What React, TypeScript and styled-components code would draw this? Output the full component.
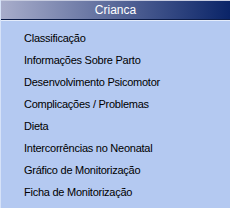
import styled, { createGlobalStyle } from "styled-components";

const GlobalStyle = createGlobalStyle`
    html, body {
        margin: 0;
        padding: 0;
        background: #b4c9f1;
    }
`;

const items = [
    "Classificação",
    "Informações Sobre Parto",
    "Desenvolvimento Psicomotor",
    "Complicações / Problemas",
    "Dieta",
    "Intercorrências no Neonatal",
    "Gráfico de Monitorização",
    "Ficha de Monitorização",
];

export default function App() {
    return (
        <>
            <GlobalStyle/>
            <Panel>
                <Header>Crianca</Header>
                <List>
                    {items.map((item, index) => (
                        <Item key={index}>{item}</Item>
                    ))}
                </List>
            </Panel>
        </>
    );
}

const Panel = styled.div`
    width: 230px;
    height: 208px;
    display: flex;
    flex-direction: column;
    background: #b4c9f1;
    border-left: 1px solid #d6e2f8;
    box-sizing: border-box;
`;

const Header = styled.div`
    height: 18px;
    display: flex;
    align-items: center;
    justify-content: center;
    color: #ffffff;
    font-family: "Liberation Sans", Arial, sans-serif;
    font-size: 12px;
    background: linear-gradient(to right, #a8adcb, #0a2468);
    border-top: 1px solid #c8cde0;
    border-bottom: 1px solid #0c1c48;
    box-shadow: 0 1px 0 #e4ecfb;
`;

const List = styled.ul`
    list-style: none;
    margin: 0;
    padding: 7px 0 0 23px;
`;

const Item = styled.li`
    height: 22px;
    line-height: 22px;
    font-family: "Liberation Sans", Arial, sans-serif;
    font-size: 11px;
    letter-spacing: -0.25px;
    color: #000000;
    white-space: nowrap;
`;
